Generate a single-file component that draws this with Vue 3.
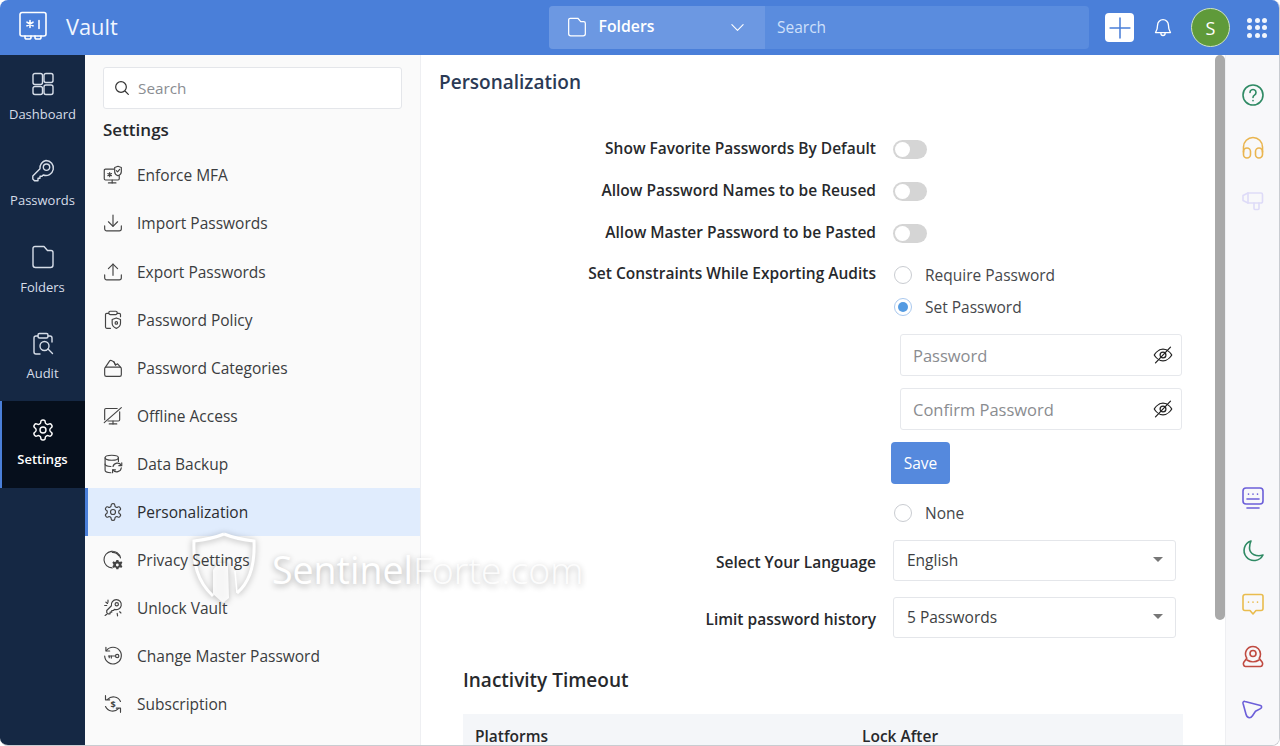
<script setup>
const gear = ['M12.22 2h-.44a2 2 0 0 0-2 2v.18a2 2 0 0 1-1 1.73l-.43.25a2 2 0 0 1-2 0l-.15-.08a2 2 0 0 0-2.73.73l-.22.38a2 2 0 0 0 .73 2.73l.15.1a2 2 0 0 1 1 1.72v.51a2 2 0 0 1-1 1.74l-.15.09a2 2 0 0 0-.73 2.73l.22.38a2 2 0 0 0 2.73.73l.15-.08a2 2 0 0 1 2 0l.43.25a2 2 0 0 1 1 1.73V20a2 2 0 0 0 2 2h.44a2 2 0 0 0 2-2v-.18a2 2 0 0 1 1-1.73l.43-.25a2 2 0 0 1 2 0l.15.08a2 2 0 0 0 2.73-.73l.22-.39a2 2 0 0 0-.73-2.73l-.15-.08a2 2 0 0 1-1-1.74v-.5a2 2 0 0 1 1-1.74l.15-.09a2 2 0 0 0 .73-2.73l-.22-.38a2 2 0 0 0-2.73-.73l-.15.08a2 2 0 0 1-2 0l-.43-.25a2 2 0 0 1-1-1.73V4a2 2 0 0 0-2-2z', 'M15 12a3 3 0 1 1-6 0 3 3 0 0 1 6 0z']

const navItems = [
  { label: 'Dashboard', paths: ['M4 1.500h5.500a2 2 0 0 1 2 2v7a2 2 0 0 1-2 2H4a2 2 0 0 1-2-2v-7a2 2 0 0 1 2-2z', 'M15 1.500h5a2 2 0 0 1 2 2v5a2 2 0 0 1-2 2h-5a2 2 0 0 1-2-2v-5a2 2 0 0 1 2-2z', 'M4 14.500h5.500a2 2 0 0 1 2 2v4a2 2 0 0 1-2 2H4a2 2 0 0 1-2-2v-4a2 2 0 0 1 2-2z', 'M15 13h5a2 2 0 0 1 2 2v5.500a2 2 0 0 1-2 2h-5a2 2 0 0 1-2-2V15a2 2 0 0 1 2-2z'] },
  { label: 'Passwords', paths: ['M15 1.500a7.500 7.500 0 1 1-2.800 14.500L11 17.200H9v2H7v2.500H3.500L1.800 20v-3l7.200-7.200A7.500 7.500 0 0 1 15 1.500z', 'M15.500 5a3.200 3.200 0 1 1 0 6.400 3.200 3.200 0 0 1 0-6.400z'] },
  { label: 'Folders', paths: ['M4 1.500h9l3.500 4H20a2 2 0 0 1 2 2V20a2.500 2.500 0 0 1-2.500 2.500h-15A2.500 2.500 0 0 1 2 20V3.500a2 2 0 0 1 2-2z'] },
  { label: 'Audit', paths: ['M7 4H5a2 2 0 0 0-2 2v14a2 2 0 0 0 2 2h4', 'M17 4h2a2 2 0 0 1 2 2v4', 'M8.500 1.500h7a1.500 1.500 0 0 1 1.500 1.500v1.500a1.500 1.500 0 0 1-1.500 1.500h-7A1.500 1.500 0 0 1 7 4.500V3a1.500 1.500 0 0 1 1.500-1.500z', 'M13.500 9.500a4.500 4.500 0 1 1 0 9 4.500 4.500 0 0 1 0-9z', 'M17 17l4.500 4.500'] },
  { label: 'Settings', paths: gear, active: true }
]

const subItems = [
  { label: 'Enforce MFA', paths: ['M13 5H3a1.500 1.500 0 0 0-1.500 1.500v10A1.500 1.500 0 0 0 3 18h15a1.500 1.500 0 0 0 1.500-1.500V13', 'M11 18v3.500', 'M6.500 21.500h9', 'M8 9v5M5.800 10.200l4.400 2.600M10.200 10.200l-4.400 2.600', 'M14 3l4-1.500L22 3v5c0 2.500-1.800 4-4 5-2.200-1-4-2.500-4-5z', 'M16 6.800l1.500 1.500 2.500-3'] },
  { label: 'Import Passwords', paths: ['M12 2.500v13', 'M6.500 10.500l5.500 5.500 5.500-5.500', 'M2 15.500V19a2.500 2.500 0 0 0 2.500 2.500h15A2.500 2.500 0 0 0 22 19v-3.500'] },
  { label: 'Export Passwords', paths: ['M12 16V2.500', 'M6.500 8L12 2.500 17.500 8', 'M2 15.500V19a2.500 2.500 0 0 0 2.500 2.500h15A2.500 2.500 0 0 0 22 19v-3.500'] },
  { label: 'Password Policy', paths: ['M7 4H4.500A1.500 1.500 0 0 0 3 5.500v15A1.500 1.500 0 0 0 4.500 22H9', 'M17 4h2.500A1.500 1.500 0 0 1 21 5.500V8', 'M8.500 1.500h7A1.500 1.500 0 0 1 17 3v1a1.500 1.500 0 0 1-1.500 1.500h-7A1.500 1.500 0 0 1 7 4V3a1.500 1.500 0 0 1 1.500-1.500z', 'M11 11.500l5-2 5 2V16c0 3-2.300 5-5 6-2.700-1-5-3-5-6z', 'M16 14a1.500 1.500 0 1 1 0 3 1.500 1.500 0 0 1 0-3z'] },
  { label: 'Password Categories', paths: ['M4 11h16a2 2 0 0 1 2 2v7a2 2 0 0 1-2 2H4a2 2 0 0 1-2-2v-7a2 2 0 0 1 2-2z', 'M3 11l5-7.500c.5-.7 1.200-.8 2-.5l3 1.500 2 4 2.500-1.500L21 11', 'M13 4.500l2 4'] },
  { label: 'Offline Access', paths: ['M20 7v9.500a1.500 1.500 0 0 1-1.500 1.500H6', 'M17 3H3.500A1.500 1.500 0 0 0 2 4.500v12', 'M22 2L1.500 20', 'M12 18v3.500', 'M7.500 21.500h9'] },
  { label: 'Data Backup', paths: ['M10.500 1.500c4.400 0 8 1.300 8 3s-3.600 3-8 3-8-1.300-8-3 3.600-3 8-3z', 'M2.500 4.500v15c0 1.500 3 2.800 7 3', 'M2.500 12c0 1.500 3 2.800 7 3', 'M18.500 4.500V9', 'M22 16.500a5.500 5.500 0 0 1-10 2.500', 'M12 15a5.500 5.500 0 0 1 10-1.500', 'M22.500 10.500v3.500H19', 'M11.500 22.500V19H15'] },
  { label: 'Personalization', paths: gear, active: true },
  { label: 'Privacy Settings', paths: ['M21 9.500A10 10 0 1 0 11 21.500', 'M11 2.800a9 9 0 0 1 8 4'], fills: ['M16 12h2.500l.4 1.700 1.500.7 1.500-.9 1.400 1.900-1.200 1.300v1.600l1.200 1.300-1.400 1.900-1.500-.9-1.500.7-.4 1.700H16l-.4-1.700-1.500-.7-1.500.9-1.400-1.900 1.200-1.300v-1.600l-1.200-1.300 1.400-1.900 1.500.9 1.500-.7zm1.200 4.300a1.700 1.700 0 1 0 0 3.400 1.700 1.700 0 0 0 0-3.400z'] },
  { label: 'Unlock Vault', paths: ['M16 2a6 6 0 1 1-2.200 11.600L12.500 15H10.500v2H8.500v2H6l-1.500-1.500V15l5.600-5.700A6 6 0 0 1 16 2z', 'M16.500 5.500a2 2 0 1 1 0 4 2 2 0 0 1 0-4z', 'M6 2.500v2.500M3.500 5l2 1.500M2 9h2.500', 'M20 16.500l1.500 1.500M17 18.500l.5 3M2.500 21l2-1.500'] },
  { label: 'Change Master Password', paths: ['M4 5.500A10 10 0 1 1 2 12', 'M3.500 1.500v4.500h4.500', 'M6.500 12h8', 'M10 12v2.500M7.500 12v2', 'M17 10a2 2 0 1 1 0 4 2 2 0 0 1 0-4z'] },
  { label: 'Subscription', paths: ['M5.500 6.500A9.500 9.500 0 0 1 21 9', 'M18.500 17.500A9.500 9.500 0 0 1 3 15', 'M3 2v5h5', 'M21 22v-5h-5'], glyph: '$' }
]

const settingToggles = ['Show Favorite Passwords By Default', 'Allow Password Names to be Reused', 'Allow Master Password to be Pasted']
const passwordFields = ['Password', 'Confirm Password']
const selects = [
  { label: 'Select Your Language', value: 'English' },
  { label: 'Limit password history', value: '5 Passwords' }
]

const eye = ['M1.500 12S5.500 5 12 5s10.500 7 10.500 7-4 7-10.500 7S1.500 12 1.500 12z', 'M12 8.500a3.500 3.500 0 1 1 0 7 3.500 3.500 0 0 1 0-7z', 'M21 2.500L3 21.500']

const railTop = [
  { color: '#2f8a64', paths: ['M12 2a10 10 0 1 1 0 20 10 10 0 0 1 0-20z', 'M9 9.500a3 3 0 1 1 4.500 2.600c-1 .6-1.500 1.200-1.500 2.400', 'M12 17.500v.3'] },
  { color: '#eab54f', paths: ['M2.500 16v-5a9.500 9.500 0 0 1 19 0v5', 'M2.500 18.500a3.500 3.500 0 0 0 7 0v-3a3.500 3.500 0 0 0-7 0z', 'M14.500 18.500a3.500 3.500 0 0 0 7 0v-3a3.500 3.500 0 0 0-7 0z'] },
  { color: '#dedbf8', paths: ['M7 4h13a1.500 1.500 0 0 1 1.500 1.500v7a1.500 1.500 0 0 1-1.500 1.500H7l-5-2.500v-5z', 'M13 14v5.500a1 1 0 0 0 1 1h3a1 1 0 0 0 1-1V14', 'M7 4v10'] }
]
const railBottom = [
  { color: '#6c5fd9', paths: ['M5 2h14a3 3 0 0 1 3 3v10a3 3 0 0 1-3 3H5a3 3 0 0 1-3-3V5a3 3 0 0 1 3-3z', 'M7.500 8v.2M12 8v.2M16.500 8v.2', 'M6 13h12', 'M6 22h12'] },
  { color: '#2f8a64', paths: ['M10 2a10 10 0 1 0 12 14c-6 2-13.500-.5-13.500-7 0-2.700.5-5 1.500-7z'] },
  { color: '#e9bc4e', paths: ['M4 2.500h16a2 2 0 0 1 2 2v12a2 2 0 0 1-2 2h-5l-3 3.500-3-3.500H4a2 2 0 0 1-2-2v-12a2 2 0 0 1 2-2z', 'M7.500 10v.2M12 10v.2M16.500 10v.2'] },
  { color: '#c04a40', paths: ['M12 1.500a7.500 7.500 0 0 1 7.500 7.500c0 1.500-.4 3-1.300 4.200l3 4c.8 1.200.5 4.300-1.700 4.300H4.500c-2.200 0-2.500-3.100-1.700-4.300l3-4A7.500 7.500 0 0 1 12 1.500z', 'M12 5.500a3 3 0 1 1 0 6 3 3 0 0 1 0-6z', 'M6 15c3.500 2.300 8.500 2.300 12 0'] },
  { color: '#6c5fd9', paths: ['M4 3.500c-1.300-.5-2.300.5-2 1.800l3 11c.4 1.500 1.600 3.500 3.500 3.500 1.300 0 2.200-.8 3-2l3-4.500 5-2.700c1.500-.8 1.500-2.500 0-3z'] }
]
const dots = Array.from({ length: 9 })
</script>

<template>
  <div class="app">
    <header class="topbar">
      <div class="brand">
        <svg class="logo" viewBox="0 0 30 30" fill="none" stroke="#fff" stroke-width="1.600" stroke-linecap="round" stroke-linejoin="round">
          <path d="M4 1.500h22a2 2 0 0 1 2 2v19.500a2 2 0 0 1-2 2H4a2 2 0 0 1-2-2V3.500a2 2 0 0 1 2-2z" />
          <path d="M7 25v1.500A1.500 1.500 0 0 0 8.500 28h3a1.500 1.500 0 0 0 1.500-1.500V25M17 25v1.500a1.500 1.500 0 0 0 1.500 1.500h3a1.500 1.500 0 0 0 1.500-1.500V25" />
          <path d="M12 9.500v7M9 11.200l6 3.600M15 11.200l-6 3.600M21 9.500v8" />
        </svg>
        <span class="brand-name">Vault</span>
      </div>
      <div class="global-search">
        <div class="scope">
          <svg class="scope-icon" viewBox="0 0 24 24" fill="none" stroke="#fff" stroke-width="1.500" stroke-linejoin="round">
            <path :d="navItems[2].paths[0]" />
          </svg>
          <span class="scope-label">Folders</span>
          <svg class="chev" viewBox="0 0 16 16" fill="none" stroke="#fff" stroke-width="1.200" stroke-linecap="round" stroke-linejoin="round">
            <path d="M2 5l6 6 6-6" />
          </svg>
        </div>
        <div class="global-input">Search</div>
      </div>
      <div class="actions">
        <div class="add">
          <svg viewBox="0 0 20 20" fill="none" stroke="#4a7fd9" stroke-width="1.400" stroke-linecap="round">
            <path d="M10 1v18M1 10h18" />
          </svg>
        </div>
        <svg class="bell" viewBox="0 0 24 24" fill="none" stroke="#fff" stroke-width="1.600" stroke-linecap="round" stroke-linejoin="round">
          <path d="M12 2a6.500 6.500 0 0 0-6.500 6.500c0 5-1 7-2.500 9h18c-1.500-2-2.500-4-2.500-9A6.500 6.500 0 0 0 12 2z" />
          <path d="M9.500 17.500v1a2.500 2.500 0 0 0 5 0v-1" />
        </svg>
        <div class="avatar">S</div>
        <div class="apps">
          <span v-for="(d, i) in dots" :key="i" class="dot"></span>
        </div>
      </div>
    </header>

    <div class="body">
      <nav class="nav">
        <div v-for="item in navItems" :key="item.label" class="nav-item" :class="{ active: item.active }">
          <svg viewBox="0 0 24 24" fill="none" stroke="currentColor" stroke-width="1.400" stroke-linecap="round" stroke-linejoin="round">
            <path v-for="d in item.paths" :key="d" :d="d" />
          </svg>
          <span>{{ item.label }}</span>
        </div>
      </nav>

      <aside class="side">
        <div class="side-search">
          <svg viewBox="0 0 24 24" fill="none" stroke="#333" stroke-width="1.800" stroke-linecap="round">
            <path d="M10.500 2.500a8 8 0 1 1 0 16 8 8 0 0 1 0-16zM16.500 16.500l5 5" />
          </svg>
          <span>Search</span>
        </div>
        <h3 class="side-title">Settings</h3>
        <ul class="side-list">
          <li v-for="item in subItems" :key="item.label" class="side-item" :class="{ active: item.active }">
            <svg viewBox="0 0 24 24" fill="none" stroke="#444" stroke-width="1.400" stroke-linecap="round" stroke-linejoin="round">
              <path v-for="d in item.paths" :key="d" :d="d" />
              <path v-for="d in item.fills || []" :key="d" :d="d" fill="#444" stroke="none" fill-rule="evenodd" />
              <text v-if="item.glyph" x="12" y="16.500" text-anchor="middle" class="glyph">{{ item.glyph }}</text>
            </svg>
            <span class="side-label">{{ item.label }}</span>
          </li>
        </ul>
      </aside>

      <main class="main">
        <h2 class="title">Personalization</h2>
        <section class="form">
          <div v-for="label in settingToggles" :key="label" class="row">
            <label class="lbl">{{ label }}</label>
            <span class="toggle"><i></i></span>
          </div>
          <div class="row row-top">
            <label class="lbl">Set Constraints While Exporting Audits</label>
            <div class="choices">
              <div class="radio-row">
                <span class="radio"></span><span>Require Password</span>
              </div>
              <div class="radio-row">
                <span class="radio on"></span><span>Set Password</span>
              </div>
              <div v-for="field in passwordFields" :key="field" class="pw">
                <span>{{ field }}</span>
                <svg viewBox="0 0 24 24" fill="none" stroke="#222" stroke-width="1.500" stroke-linecap="round" stroke-linejoin="round">
                  <path v-for="d in eye" :key="d" :d="d" />
                </svg>
              </div>
              <button class="save" type="button">Save</button>
              <div class="radio-row none">
                <span class="radio"></span><span>None</span>
              </div>
            </div>
          </div>
          <div v-for="s in selects" :key="s.label" class="row row-select">
            <label class="lbl">{{ s.label }}</label>
            <div class="select">
              <span>{{ s.value }}</span>
              <i class="caret"></i>
            </div>
          </div>
        </section>
        <section class="timeout">
          <h3>Inactivity Timeout</h3>
          <div class="thead">
            <span class="col-a">Platforms</span>
            <span>Lock After</span>
          </div>
        </section>
      </main>

      <div class="scroll"><div class="thumb"></div></div>

      <aside class="rail">
        <svg v-for="(ic, i) in railTop" :key="i" viewBox="0 0 24 24" fill="none" :stroke="ic.color" stroke-width="1.600" stroke-linecap="round" stroke-linejoin="round">
          <path v-for="d in ic.paths" :key="d" :d="d" />
        </svg>
        <div class="rail-gap"></div>
        <svg v-for="(ic, i) in railBottom" :key="'b' + i" viewBox="0 0 24 24" fill="none" :stroke="ic.color" stroke-width="1.600" stroke-linecap="round" stroke-linejoin="round">
          <path v-for="d in ic.paths" :key="d" :d="d" />
        </svg>
      </aside>
    </div>

    <div class="watermark">
      <svg viewBox="0 0 66 72" fill="none">
        <path d="M33 2C43 6 53 8 63 9c1 22-3 40-17 52M33 2C23 6 13 8 3 9c-1 22 3 40 19 55" stroke="#fff" stroke-width="3" />
        <path d="M22 62V38l5-7h9l1 3 1 32-6 5z" fill="#fff" fill-opacity=".85" />
        <path d="M46 61l-2-22" stroke="#fff" stroke-width="1.500" />
      </svg>
      <span class="wm-text"><b>Sentinel</b>Forte.com</span>
    </div>
  </div>
</template>

<style>
html, body { margin: 0; background: #fff; }
</style>

<style scoped>
* { box-sizing: border-box; }
.app {
  position: relative;
  width: 1280px;
  height: 746px;
  overflow: hidden;
  display: flex;
  flex-direction: column;
  border-radius: 8px;
  border: 1px solid #c9ccd1;
  border-top: 0;
  border-left: 0;
  font-family: "Open Sans", "Noto Sans", sans-serif;
  color: #333;
  background: #fff;
}
.topbar {
  height: 55px;
  flex: none;
  display: flex;
  align-items: center;
  background: #4a7fd9;
  color: #fff;
}
.brand { width: 549px; display: flex; align-items: center; padding-left: 18px; gap: 18px; }
.logo { width: 30px; height: 30px; margin-top: -3px; }
.brand-name { font-size: 21.800px; line-height: 30px; color: #f0f6ff; margin-top: -2px; }
.global-search {
  width: 540px;
  height: 43px;
  margin-top: -1px;
  display: flex;
  border-radius: 4px;
  overflow: hidden;
  background: #5a8cde;
}
.scope {
  width: 216px;
  display: flex;
  align-items: center;
  padding: 0 20px 0 18px;
  background: #6c98e2;
}
.scope-icon { width: 20px; height: 22px; }
.scope-label { margin: -3px 0 0 11.500px; font-size: 15.800px; font-weight: 600; flex: 1; }
.chev { width: 15px; height: 15px; }
.global-input { padding-left: 12px; line-height: 43px; font-size: 15.500px; color: #cfe0fa; }
.actions { display: flex; align-items: center; margin-left: 16px; }
.add {
  width: 29px;
  height: 29px;
  background: #fff;
  border-radius: 4px;
  display: flex;
  align-items: center;
  justify-content: center;
}
.add svg { width: 22px; height: 22px; }
.bell { width: 20px; height: 22px; margin-left: 19px; }
.avatar {
  width: 39px;
  height: 39px;
  margin-left: 18px;
  border-radius: 50%;
  background: #5f9a3a;
  border: 1px solid #cfe3c2;
  display: flex;
  align-items: center;
  justify-content: center;
  font-size: 18px;
}
.apps {
  margin-left: 17px;
  width: 20px;
  display: grid;
  grid-template-columns: repeat(3, 5px);
  gap: 2.500px;
}
.dot { width: 5px; height: 5px; border-radius: 50%; background: #fff; opacity: .92; }

.body { flex: 1; display: flex; min-height: 0; }

.nav { width: 85px; flex: none; background: #152844; color: #d6dde8; }
.nav-item {
  height: 86.500px;
  display: flex;
  flex-direction: column;
  align-items: center;
  padding-top: 17px;
  font-size: 13px;
  line-height: 18px;
  border-left: 2px solid transparent;
}
.nav-item svg { width: 24px; height: 24px; margin-bottom: 8.500px; margin-left: -2px; flex: none; }
.nav-item span { margin-left: -2px; }
.nav-item.active { background: #060f1c; color: #fff; font-weight: 600; border-left-color: #4a7fd9; }
.nav-item.active svg { margin-bottom: 7.500px; }

.side {
  width: 336px;
  flex: none;
  background: #fafafa;
  border-right: 1px solid #eeeff2;
  display: flex;
  flex-direction: column;
}
.side-search {
  margin: 12px 18px 0;
  height: 42px;
  background: #fff;
  border: 1px solid #e4e6ea;
  border-radius: 3px;
  display: flex;
  align-items: center;
  padding-left: 10px;
  font-size: 15.300px;
  color: #8a8d92;
}
.side-search svg { width: 16px; height: 16px; margin-right: 8px; }
.side-search span { margin-top: -1px; }
.side-title { margin: 9px 18px 0; font-size: 17px; line-height: 24px; font-weight: 600; color: #26282c; }
.side-list { margin: 9.400px 0 0; padding: 0; list-style: none; }
.side-item {
  height: 48.050px;
  display: flex;
  align-items: center;
  padding-left: 18px;
  font-size: 15.500px;
  color: #3b3d40;
}
.side-item svg { width: 20px; height: 20px; margin-right: 14px; flex: none; }
.side-label { position: relative; z-index: 2; }
.side-item.active { background: #e0ecfd; box-shadow: inset 3px 0 0 #4a7fd9; color: #2b2d30; }
.glyph { font: 700 11px "Open Sans", sans-serif; fill: #444; stroke: none; }

.main { flex: 1; min-width: 0; overflow: hidden; padding: 14px 0 0 18px; background: #fff; }
.title { margin: 0; font-size: 19px; line-height: 27px; font-weight: 600; color: #2b3a55; }
.form { margin-top: 33px; }
.row { display: flex; height: 41.750px; align-items: center; }
.lbl {
  width: 437px;
  margin-right: 17px;
  text-align: right;
  font-size: 15.500px;
  font-weight: 600;
  color: #27292c;
  padding-bottom: 3px;
}
.toggle {
  width: 34px;
  height: 19px;
  border-radius: 10px;
  background: #d5d5d5;
  display: flex;
  align-items: center;
  padding-left: 2px;
}
.toggle i { width: 15px; height: 15px; border-radius: 50%; background: #fff; }
.row-top { height: auto; align-items: flex-start; margin-top: 4.750px; }
.row-top .lbl { padding: 3px 0 0; }
.choices { width: 300px; display: flex; flex-direction: column; }
.radio-row { display: flex; align-items: center; height: 32px; font-size: 15.500px; color: #45474b; }
.radio {
  width: 18px;
  height: 18px;
  margin: 0 13px 0 1px;
  border-radius: 50%;
  border: 1px solid #c9ccd1;
  background: #fff;
  position: relative;
}
.radio.on { border-color: #a9c8ee; }
.radio.on::after {
  content: "";
  position: absolute;
  inset: 3px;
  border-radius: 50%;
  background: #559be2;
}
.pw {
  width: 282px;
  height: 42px;
  margin: 0 0 12px 7px;
  border: 1px solid #e6e8ec;
  border-radius: 3px;
  display: flex;
  align-items: center;
  justify-content: space-between;
  padding: 0 8px 0 12px;
  font-size: 16.500px;
  color: #8a8c90;
}
.radio-row + .pw { margin-top: 11px; }
.pw svg { width: 20px; height: 20px; }
.save {
  width: 59px;
  height: 42px;
  margin-left: -2px;
  border: 0;
  border-radius: 4px;
  background: #5589dd;
  color: #fff;
  font: 400 15.500px "Open Sans", sans-serif;
  padding: 0;
}
.none { margin-top: 13px; }
.row-select { height: 41px; margin-top: 16px; }
.row-top + .row-select { margin-top: 11px; }
.row-select .lbl { padding: 2px 0 0; }
.select {
  width: 283px;
  height: 41px;
  border: 1px solid #e4e6ea;
  border-radius: 3px;
  display: flex;
  align-items: center;
  justify-content: space-between;
  padding: 0 12px 2px 13px;
  font-size: 15.500px;
  color: #3d3f43;
}
.caret { width: 0; height: 0; border: 5px solid transparent; border-top: 5px solid #777; border-bottom: 0; }
.timeout { margin: 29px 32px 0 24px; }
.timeout h3 { margin: 0; font-size: 19px; line-height: 27px; font-weight: 600; color: #27292c; }
.thead {
  margin-top: 20px;
  height: 31px;
  background: #f4f6f9;
  display: flex;
  align-items: center;
  padding: 13px 12px 0;
  font-size: 15.500px;
  line-height: 18px;
  font-weight: 600;
  color: #27292c;
}
.col-a { width: 387px; }

.scroll { width: 10px; flex: none; background: #fff; }
.thumb { width: 10px; height: 565px; background: #a9a9a9; border-radius: 5px; }

.rail {
  width: 54px;
  flex: none;
  background: #f8f8fa;
  border-left: 1px solid #eeeff2;
  display: flex;
  flex-direction: column;
  align-items: center;
  padding: 28px 0 23px;
}
.rail svg { width: 24px; height: 24px; margin-bottom: 29px; flex: none; }
.rail svg:last-child { margin-bottom: 0; }
.rail-gap { flex: 1; }

.watermark {
  position: absolute;
  z-index: 1;
  left: 191px;
  top: 532px;
  display: flex;
  align-items: flex-start;
  pointer-events: none;
}
.watermark svg { width: 66px; height: 72px; filter: drop-shadow(0 1px 3px rgba(0, 0, 0, .3)); }
.wm-text {
  margin: 13px 0 0 15px;
  font-size: 37.500px;
  line-height: 50px;
  font-weight: 300;
  color: rgba(255, 255, 255, .9);
  text-shadow: 0 2px 6px rgba(0, 0, 0, .32);
  white-space: nowrap;
}
.wm-text b { font-weight: 400; color: #fff; }
</style>
